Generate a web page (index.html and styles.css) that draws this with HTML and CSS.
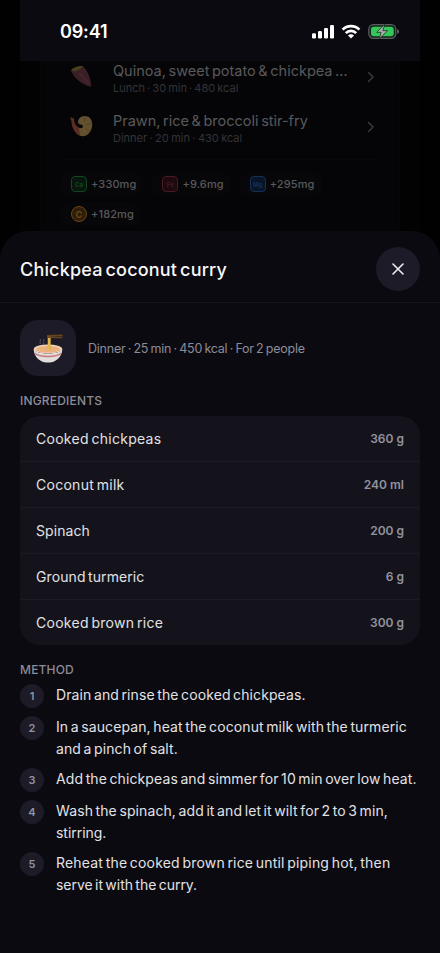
FILE: index.html
```html
<!DOCTYPE html>
<html lang="en">
<head>
<meta charset="utf-8">
<title>Chickpea coconut curry</title>
<link rel="stylesheet" href="styles.css">
</head>
<body>
<div class="screen">
  <header class="status">
    <span class="time">09:41</span>
    <span class="indicators">
      <svg class="signal" width="23" height="16" viewBox="0 0 23 16" fill="#fff"><rect x="0" y="9.3" width="4" height="5.2" rx="1.3"/><rect x="6" y="7" width="4" height="7.5" rx="1.3"/><rect x="12" y="4" width="4" height="10.5" rx="1.3"/><rect x="18" y="1" width="4" height="13.5" rx="1.3"/></svg>
      <svg class="wifi" width="20" height="16" viewBox="0 0 20 16" fill="none" stroke="#fff" stroke-width="2.6"><path d="M1.6 5.7C6 .9 14 .9 18.4 5.7"/><path d="M4.8 9.1C7.6 6.1 12.4 6.1 15.2 9.1"/><path d="M10 14.5 7 11.4C8.600 9.700 11.400 9.700 13 11.400Z" fill="#fff" stroke="none"/></svg>
      <svg class="battery" width="32" height="18" viewBox="0 0 32 18"><rect x=".8" y="1.7" width="27" height="13.6" rx="4.6" fill="#14231b" stroke="#58605c" stroke-width="1.2"/><rect x="3" y="3.7" width="22.7" height="9.6" rx="2.8" fill="#34c759"/><path d="M29.3 6.2v4.6c2.1-.7 2.1-3.9 0-4.600Z" fill="#77777b"/><path d="M16.800 1 8.600 9.400h4.500l-1.900 6.700 8.300-8.500h-4.600Z" fill="#a5a9a7" stroke="#17281d" stroke-width=".7"/></svg>
    </span>
  </header>

  <main class="backdrop">
    <section class="plan">
      <div class="meal">
        <svg class="food" width="24" height="24" viewBox="0 0 24 24"><path d="M1 5.2 13 1.4c4 3 8.3 12.5 8.2 20.400C12 20 3 12.500 1 5.200Z" fill="#3b1f26"/><path d="M9 8c3 3 7 7 10 11" stroke="#44252b" stroke-width="2" fill="none"/><path d="M1 5.200C3 2 11 0 13 1.400 11 4.500 3 7.500 1 5.200Z" fill="#47411f"/></svg>
        <div class="meal-text"><div class="meal-name">Quinoa, sweet potato &amp; chickpea …</div><div class="meal-meta lunch">Lunch · 30 min · 480 kcal</div></div>
        <svg class="chevron" width="8" height="12" viewBox="0 0 8 12"><path d="m1.500 1.500 4.500 4.500-4.500 4.500"/></svg>
      </div>
      <div class="meal">
        <svg class="food" width="24" height="24" viewBox="0 0 24 24"><path d="M8 7C8 3.500 11 1.300 14.500 1c5-.2 8.300 4 7.700 9.500-.6 6.500-5 11-9.700 10.800C9 21 6 19 4.500 15L8.500 12.500c1.500 1 3 1 4 0 .8-1.200.5-2.500-.8-2.700C10 10 8.300 8.800 8 7Z" fill="#62502f"/><path d="M0 2 4 3.500c-.3 3.500 1.500 7 5 9.500l1 7C4.500 18.500 1.500 12 1.500 6.500Z" fill="#5a2c22"/><path d="m15 1-.5 6m7.500 1-6 2m4 7-5-4" stroke="#4d3d24" stroke-width=".7"/></svg>
        <div class="meal-text"><div class="meal-name">Prawn, rice &amp; broccoli stir-fry</div><div class="meal-meta">Dinner · 20 min · 430 kcal</div></div>
        <svg class="chevron" width="8" height="12" viewBox="0 0 8 12"><path d="m1.500 1.500 4.500 4.500-4.500 4.500"/></svg>
      </div>
      <div class="nutrients">
        <span class="pill"><i class="mark ca">Ca</i>+330mg</span>
        <span class="pill"><i class="mark fe">Fe</i>+9.6mg</span>
        <span class="pill"><i class="mark mg">Mg</i>+295mg</span>
        <span class="pill"><i class="mark vit">C</i>+182mg</span>
      </div>
    </section>
  </main>

  <section class="sheet">
    <div class="sheet-head">
      <h1>Chickpea coconut curry</h1>
      <button class="close" aria-label="Close"><svg width="12" height="12" viewBox="0 0 12 12"><path d="m1 1 10 10M11 1 1 11"/></svg></button>
    </div>
    <div class="sheet-body">
      <div class="summary">
        <div class="tile"><svg width="32" height="32" viewBox="0 0 32 32"><path d="M8.500 11c-2-2 1.500-3-.5-5m4 5c-2-2 1.500-3-.5-5" fill="none" stroke="#56545e" stroke-width="1"/><ellipse cx="16" cy="16" rx="14.200" ry="4.500" fill="#f4d3bd"/><ellipse cx="16" cy="16.300" rx="12.200" ry="3.300" fill="#e8b17d"/><path d="M15.700 2.300h3V17h-3Z" fill="#d6ac43"/><path d="M17 2v15" stroke="#f0cc66" stroke-width=".8"/><path d="M15 2.700 30.500 2.300M15 4.300l15.500.2" stroke="#69451f" stroke-width="1.500"/><path d="M1.700 16c2 6 26.600 6 28.600 0-.1 6-3.700 10.300-8.300 12.500-2.500 1.400-9.500 1.400-12 0C5.400 26.300 1.800 22 1.700 16Z" fill="#e3dcda"/><path d="M2.800 20.300c4.500 4.200 21.900 4.200 26.400 0" fill="none" stroke="#c6797c" stroke-width="1.400"/></svg></div>
        <p>Dinner · 25 min · 450 kcal · For 2 people</p>
      </div>
      <h2>INGREDIENTS</h2>
      <ul class="ingredients">
        <li><span class="wide">Cooked chickpeas</span><b>360 g</b></li>
        <li><span class="wide">Coconut milk</span><b>240 ml</b></li>
        <li><span>Spinach</span><b>200 g</b></li>
        <li><span>Ground turmeric</span><b>6 g</b></li>
        <li><span class="wide">Cooked brown rice</span><b>300 g</b></li>
      </ul>
      <h2>METHOD</h2>
      <ol class="steps">
        <li><i>1</i><p>Drain and rinse the cooked chickpeas.</p></li>
        <li><i>2</i><p>In a saucepan, heat the coconut milk with the turmeric<br>and a pinch of salt.</p></li>
        <li><i>3</i><p>Add the chickpeas and simmer for 10 min over low heat.</p></li>
        <li><i>4</i><p>Wash the spinach, add it and let it wilt for 2 to 3 min,<br><span class="tight">stirring.</span></p></li>
        <li><i>5</i><p><span class="loose">Reheat the cooked brown rice until piping hot, then</span><br><span class="tight">serve it with the curry.</span></p></li>
      </ol>
    </div>
  </section>
</div>
</body>
</html>
```
FILE: styles.css
```css
* { box-sizing: border-box; margin: 0; padding: 0; }
body { background: #000; font-family: Inter, "Liberation Sans", sans-serif; }
.screen { width: 440px; height: 953px; display: flex; flex-direction: column; overflow: hidden; background: #010102; }
i { font-style: normal; }
svg { display: block; flex: none; }

.status { height: 61px; margin: 0 20px; padding: 2px 20px 0 40px; background: #0b0a10; display: flex; align-items: center; justify-content: space-between; flex: none; }
.time { color: #fff; font-size: 18px; font-weight: 600; letter-spacing: -0.15px; }
.indicators { display: flex; align-items: center; gap: 6px; }
.battery { margin-left: 1px; }

.backdrop { height: 170px; flex: none; margin: 0 20px; padding: 0 20px; background: #020203; overflow: hidden; }
.plan { height: 178px; background: #050507; border: solid #070709; border-width: 0 1px; padding: 0 19px; overflow: hidden; display: flow-root; }
.meal { height: 50px; display: flex; align-items: center; padding: 0 5px 0 10px; }
.meal:first-child { margin-top: -9px; }
.food { margin-right: 19px; }
.meal-text { flex: 1; padding-top: 1px; white-space: nowrap; }
.meal-name { font-size: 14.5px; line-height: 20px; color: #59595b; word-spacing: -1.5px; }
.meal-meta { font-size: 11px; line-height: 14px; color: #343437; word-spacing: -0.7px; }
.lunch { word-spacing: -1px; }
.chevron path, .close path { fill: none; stroke-linecap: round; stroke-linejoin: round; }
.chevron path { stroke: #39393c; stroke-width: 1.5; }
.nutrients { border-top: 1px solid #08080a; margin-top: 7px; padding-top: 12px; display: flex; flex-wrap: wrap; gap: 6px 7px; }
.pill { height: 24px; padding: 0 8px 0 11px; border-radius: 12px; background: #07070a; display: flex; align-items: center; gap: 4px; color: #59595c; font-size: 11px; font-weight: 500; letter-spacing: 0.12px; }
.mark { width: 16px; height: 16px; border: 1px solid; border-radius: 4px; font-size: 6px; font-weight: 700; display: grid; place-items: center; }
.ca { color: #14461f; background: #07170d; }
.fe { color: #4b1a20; background: #1c0a0e; }
.mg { color: #153058; background: #081427; }
.vit { color: #6b4614; background: #2d1d09; border-radius: 50%; font-size: 9px; }

.sheet { flex: 1; background: #0b0a10; border-radius: 28px 28px 0 0; }
.sheet-head { height: 72px; padding: 4px 20px 0; border-bottom: 1px solid #15141a; display: flex; align-items: center; justify-content: space-between; }
h1 { color: #f7f7f8; font-size: 18px; line-height: 24px; font-weight: 550; letter-spacing: 0.18px; word-spacing: -2px; white-space: nowrap; padding-top: 2px; }
.close { width: 44px; height: 44px; border: 0; border-radius: 50%; background: #1c1b27; display: grid; place-items: center; }
.close path { stroke: #ededf0; stroke-width: 1.6; }
.sheet-body { padding: 17px 20px 0; }
.summary { display: flex; align-items: center; gap: 12px; color: #8c8c98; font-size: 12.5px; letter-spacing: -0.22px; word-spacing: -1px; white-space: nowrap; }
.summary p { padding-top: 1px; }
.tile { width: 56px; height: 56px; border-radius: 18px; background: #1c1b27; display: grid; place-items: center; padding-top: 2px; }
h2 { color: #8c8c98; font-size: 12px; line-height: 16px; font-weight: 500; letter-spacing: 0.18px; margin-top: 17px; }
.ingredients { list-style: none; margin-top: 7px; border-radius: 20px; background: #14131b; overflow: hidden; }
.ingredients li { height: 46px; padding: 0 16px 1px; border-bottom: 1px solid #1c1b23; display: flex; align-items: center; justify-content: space-between; color: #e2e2e5; font-size: 14px; }
.ingredients li:last-child { height: 45px; border: 0; }
.ingredients span { letter-spacing: 0.09px; word-spacing: -1.5px; }
.ingredients .wide { letter-spacing: 0.27px; }
.ingredients b { font-size: 12px; font-weight: 600; color: #92929e; }
.steps { list-style: none; margin-top: 6px; display: flex; flex-direction: column; gap: 8px; }
.steps li { display: flex; gap: 12px; min-height: 24px; }
.steps i { width: 24px; height: 24px; border-radius: 50%; flex: none; background: #1c1b27; color: #9292a0; font-size: 11px; font-weight: 600; display: grid; place-items: center; }
.steps p { font-size: 14px; line-height: 22px; color: #e2e2e5; letter-spacing: 0.1px; word-spacing: -1.5px; white-space: nowrap; }
.steps .tight { letter-spacing: -0.03px; }
.steps .loose { letter-spacing: 0.18px; }
```
